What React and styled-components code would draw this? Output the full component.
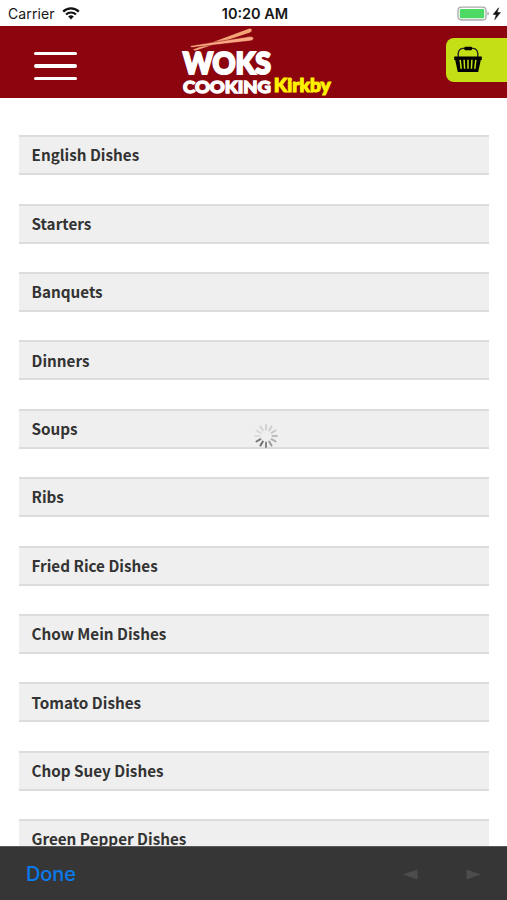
import styled, { createGlobalStyle } from 'styled-components';

const categories = [
    'English Dishes',
    'Starters',
    'Banquets',
    'Dinners',
    'Soups',
    'Ribs',
    'Fried Rice Dishes',
    'Chow Mein Dishes',
    'Tomato Dishes',
    'Chop Suey Dishes',
    'Green Pepper Dishes',
];

const spokes = ['#858585', '#6f6f6f', '#777777', '#dcdcdc', '#d8d8d8', '#d4d4d4', '#d2d2d2', '#cecece', '#c8c8c8', '#bdbdbd', '#b0b0b0', '#9c9c9c'];

function WifiIcon(){
    return (
        <svg width="18" height="13" viewBox="0 0 18 13" fill="none" stroke="#111">
            <path d="M1.2 4.6 A11 11 0 0 1 16.8 4.6" strokeWidth="2.3" />
            <path d="M4 7.5 A7.1 7.1 0 0 1 14 7.5" strokeWidth="2.1" />
            <path d="M9 12.4 L6.2 9.6 A4 4 0 0 1 11.8 9.6 Z" fill="#111" stroke="none" />
        </svg>
    )
}

function Battery(){
    return (
        <svg width="45" height="16" viewBox="0 0 45 16">
            <rect x="1" y="1.2" width="28" height="12.8" rx="3.2" fill="#fff" stroke="#a9a9a9" strokeWidth="1.3" />
            <rect x="2.8" y="3" width="24.4" height="9.2" rx="1.2" fill="#4cd964" />
            <path d="M30.4 5.6 Q32 6.2 32 7.6 Q32 9 30.4 9.6 Z" fill="#a9a9a9" />
            <path d="M41.6 1.8 L36.2 8.5 H39.3 L37.8 13.6 L43.4 6.6 H40.1 Z" fill="#111" stroke="#111" strokeWidth="0.6" />
        </svg>
    )
}

function Logo(){
    return (
        <LogoDrawing width="156" height="72" viewBox="0 0 156 72">
            <path d="M17 23.4 L73.5 2.5 Q75.8 2.3 75.8 4 Q75.7 5.7 74 6.6 L19 24.8 Z" fill="#f3a477" />
            <path d="M14.5 19.8 L73.5 10.6 Q77.6 10.4 77.5 12.6 Q77.4 14.4 75 14.8 L15 21.6 Z" fill="#f9a983" stroke="#8b040e" strokeWidth="0.5" />
            <LogoText x="7" y="48.4" fontSize="31" textLength="88" lengthAdjust="spacingAndGlyphs" strokeWidth="2.2">WOKS</LogoText>
            <LogoText x="7" y="66.8" fontSize="17.5" textLength="88" lengthAdjust="spacingAndGlyphs" strokeWidth="1.3">COOKING</LogoText>
            <LogoText $color="#fff200" x="97.8" y="66" fontSize="19.5" textLength="57" lengthAdjust="spacingAndGlyphs" strokeWidth="1.1">Kirkby</LogoText>
        </LogoDrawing>
    )
}

function BasketIcon(){
    return (
        <svg width="28" height="27" viewBox="0 0 28 27">
            <path d="M4.2 11.5 V7.5 Q4.6 2.8 8.8 2.4 H19.2 Q23.4 2.8 23.8 7.5 V11.5" fill="none" stroke="#222" strokeWidth="1.4" />
            <rect x="10.3" y="0.8" width="7.8" height="3.4" rx="1.2" fill="#000" />
            <path d="M0.2 10.5 H27.8 V14 H26.8 L24.2 25.9 H3.8 L1.2 14 H0.2 Z" fill="#000" />
            <path d="M6.2 13.8 L7.2 22.8 M10.1 13.8 L10.6 22.8 M14 13.8 V22.8 M17.9 13.8 L17.4 22.8 M21.8 13.8 L20.8 22.8" stroke="#c5df16" strokeWidth="1.5" />
        </svg>
    )
}

function Spinner(){
    return (
        <SpinnerDrawing width="26" height="26" viewBox="-13 -13 26 26">
            {spokes.map((color, i) => (
                <line key={i} y1="6.4" y2="11" stroke={color} strokeWidth="2" strokeLinecap="round" transform={`rotate(${i * 30})`} />
            ))}
        </SpinnerDrawing>
    )
}

function App(){
    return (
        <Screen>
            <GlobalStyle />
            <StatusBar>
                <Carrier>Carrier <WifiIcon /></Carrier>
                <Time>10:20 AM</Time>
                <Power><Battery /></Power>
            </StatusBar>
            <Header>
                <MenuButton aria-label="Menu">
                    <MenuLine />
                    <MenuLine />
                    <MenuLine />
                </MenuButton>
                <Logo />
                <BasketButton aria-label="Basket"><BasketIcon /></BasketButton>
            </Header>
            <Menu>
                {categories.map((name) => <Category key={name}>{name}</Category>)}
            </Menu>
            <Spinner />
            <Toolbar>
                <Done>Done</Done>
                <Arrows>
                    <svg width="15" height="11" viewBox="0 0 15 11"><path d="M0 5.5 L14.5 0.5 V10.5 Z" fill="#4c4c4c" /></svg>
                    <svg width="15" height="11" viewBox="0 0 15 11"><path d="M15 5.5 L0.5 0.5 V10.5 Z" fill="#4c4c4c" /></svg>
                </Arrows>
            </Toolbar>
        </Screen>
    )
}
export default App;

const GlobalStyle = createGlobalStyle`
* {
    box-sizing: border-box;
}
body {
    margin: 0;
    background: white;
}
`

const Screen = styled.div`
position: relative;
display: flex;
flex-direction: column;
width: 507px;
height: 900px;
overflow: hidden;
background: white;
`

const StatusBar = styled.div`
display: grid;
grid-template-columns: 1fr auto 1fr;
align-items: center;
height: 25.6px;
flex-shrink: 0;
padding: 2px 5px 0 8px;
font-family: Inter, sans-serif;
color: #161616;
`

const Carrier = styled.div`
display: flex;
align-items: center;
gap: 7px;
font-size: 14px;
letter-spacing: 0.1px;
`

const Time = styled.div`
font-size: 14.5px;
font-weight: 600;
`

const Power = styled.div`
display: flex;
justify-content: flex-end;
`

const Header = styled.header`
display: flex;
align-items: flex-start;
height: 72.8px;
flex-shrink: 0;
background: #8b040e;
`

const MenuButton = styled.button`
display: flex;
flex-direction: column;
gap: 9px;
width: 43px;
margin: 26.4px 0 0 33.5px;
padding: 0;
border: none;
background: none;
`

const MenuLine = styled.span`
height: 3.5px;
border-radius: 2px;
background: white;
`

const LogoDrawing = styled.svg`
margin-left: 99px;
overflow: visible;
`

const LogoText = styled.text`
font-family: Lato, sans-serif;
font-weight: 900;
fill: ${(props) => props.$color || 'white'};
stroke: ${(props) => props.$color || 'white'};
`

const BasketButton = styled.button`
display: flex;
align-items: center;
width: 61.5px;
height: 44.5px;
margin: 12px 0 0 auto;
padding: 0 0 0 8.5px;
border: none;
border-radius: 8px 0 0 8px;
background: #c5df16;
`

const Menu = styled.main`
display: flex;
flex-direction: column;
gap: 28.4px;
flex: 1;
min-height: 0;
overflow: hidden;
padding: 36.9px 18.5px 0 19px;
`

const Category = styled.div`
display: flex;
align-items: center;
height: 40px;
flex-shrink: 0;
padding: 0 12.5px 1.8px;
border-top: solid 2px #dcdcdc;
border-bottom: solid 2px #dcdcdc;
background: #efefef;
color: #333;
font-family: "Noto Sans CJK SC", sans-serif;
font-size: 15.25px;
font-weight: 700;
`

/* floats over the list while the page loads */
const SpinnerDrawing = styled.svg`
position: absolute;
top: 423px;
left: 253px;
`

const Toolbar = styled.footer`
display: flex;
align-items: center;
justify-content: space-between;
height: 54px;
flex-shrink: 0;
padding: 0 26px;
border-top: solid 1px #5a5a5a;
background: #363636;
`

const Done = styled.span`
color: #0a7aed;
font-family: Inter, sans-serif;
font-size: 20px;
font-weight: 500;
letter-spacing: -0.1px;
`

const Arrows = styled.div`
display: flex;
gap: 48px;
padding-top: 2px;
`
